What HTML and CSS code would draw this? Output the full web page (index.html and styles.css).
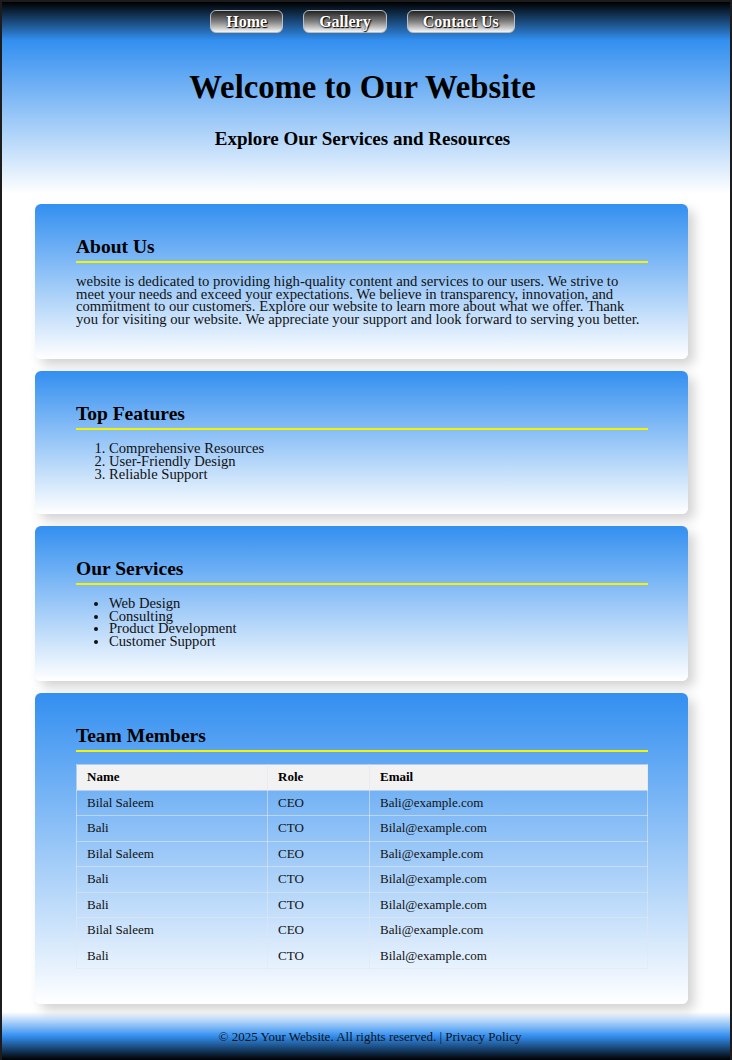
FILE: index.html
```html
<!DOCTYPE html>
<html lang="en">
<head>
<meta charset="utf-8">
<title>Welcome to Our Website</title>
<link rel="stylesheet" href="styles.css">
</head>
<body>
<div class="frame">
  <header class="site-header">
    <nav class="nav">
      <a class="nav-btn" href="#">Home</a>
      <a class="nav-btn" href="#">Gallery</a>
      <a class="nav-btn" href="#">Contact Us</a>
    </nav>
    <h1 class="title">Welcome to Our Website</h1>
    <h2 class="subtitle">Explore Our Services and Resources</h2>
  </header>

  <main class="main">
    <section class="card">
      <h2 class="card-title">About Us</h2>
      <p class="card-text">website is dedicated to providing high-quality content and services to our users. We strive to meet your needs and exceed your expectations. We believe in transparency, innovation, and commitment to our customers. Explore our website to learn more about what we offer. Thank you for visiting our website. We appreciate your support and look forward to serving you better.</p>
    </section>

    <section class="card">
      <h2 class="card-title">Top Features</h2>
      <ol class="card-list">
        <li>Comprehensive Resources</li>
        <li>User-Friendly Design</li>
        <li>Reliable Support</li>
      </ol>
    </section>

    <section class="card">
      <h2 class="card-title">Our Services</h2>
      <ul class="card-list">
        <li>Web Design</li>
        <li>Consulting</li>
        <li>Product Development</li>
        <li>Customer Support</li>
      </ul>
    </section>

    <section class="card">
      <h2 class="card-title">Team Members</h2>
      <table class="team">
        <thead>
          <tr><th class="col-name">Name</th><th class="col-role">Role</th><th>Email</th></tr>
        </thead>
        <tbody>
          <tr><td>Bilal Saleem</td><td>CEO</td><td>Bali@example.com</td></tr>
          <tr><td>Bali</td><td>CTO</td><td>Bilal@example.com</td></tr>
          <tr><td>Bilal Saleem</td><td>CEO</td><td>Bali@example.com</td></tr>
          <tr><td>Bali</td><td>CTO</td><td>Bilal@example.com</td></tr>
          <tr><td>Bali</td><td>CTO</td><td>Bilal@example.com</td></tr>
          <tr><td>Bilal Saleem</td><td>CEO</td><td>Bali@example.com</td></tr>
          <tr><td>Bali</td><td>CTO</td><td>Bilal@example.com</td></tr>
        </tbody>
      </table>
    </section>
  </main>

  <footer class="site-footer">
    <p class="footer-text">&copy; 2025 Your Website. All rights reserved. | <a class="footer-link" href="#">Privacy Policy</a></p>
  </footer>
</div>
</body>
</html>
```

FILE: styles.css
```css
* { box-sizing: border-box; }

html, body {
  margin: 0;
  padding: 0;
  background: #ffffff;
}

body {
  font-family: "Liberation Serif", "Times New Roman", serif;
  color: #111;
}

.frame {
  border: 2px solid #1c1c1c;
  min-height: 1060px;
  background: #fff;
}

/* Header */
.site-header {
  background: linear-gradient(to bottom, #000000 0%, #338ff0 20%, #ffffff 100%);
  padding: 8px 7px 44px 0;
  text-align: center;
}

.nav {
  display: flex;
  justify-content: center;
  gap: 20px;
}

.nav-btn {
  display: inline-block;
  font-weight: bold;
  font-size: 16px;
  line-height: 15px;
  padding: 3px 15px;
  color: #fff;
  text-decoration: none;
  border: 1px solid #bdbdbd;
  border-radius: 6px;
  background: linear-gradient(to bottom, #222 0%, #808080 50%, #f6f6f6 100%);
  text-shadow: 1px 1px 1px #000, 0 0 2px #222;
}

.title {
  margin: 36px 0 0;
  font-size: 32.7px;
  line-height: 36px;
  font-weight: bold;
  color: #000;
}

.subtitle {
  margin: 23px 0 0;
  font-size: 19px;
  line-height: 22px;
  font-weight: bold;
  color: #000;
}

/* Main */
.main {
  padding: 10px 42px 8px 33px;
  display: flex;
  flex-direction: column;
  gap: 12px;
}

.card {
  background: linear-gradient(to bottom, #338ff0 0%, #ffffff 100%);
  border-radius: 6px;
  padding: 32px 40px 33.5px 41px;
  box-shadow: 6px 6px 12px rgba(0, 0, 0, 0.18);
}

.card-title {
  margin: 0;
  font-size: 19.5px;
  line-height: 22px;
  font-weight: bold;
  color: #000;
  padding-bottom: 3px;
  border-bottom: 2px solid #f4f400;
}

.card-text {
  margin: 12px 0 0;
  max-width: 568px;
  font-size: 14.7px;
  line-height: 12.7px;
  color: #111;
}

.card-list {
  margin: 12px 0 0;
  padding-left: 33px;
  font-size: 14.6px;
  line-height: 12.7px;
  color: #111;
}

/* Table */
.team {
  margin: 12px 0 1.5px;
  width: 100%;
  border-collapse: collapse;
  font-size: 13px;
  line-height: 14.5px;
  color: #111;
}

.team th,
.team td {
  text-align: left;
  padding: 5px 10px;
  border: 1px solid rgba(225, 230, 240, 0.6);
}

.team th {
  background: #f2f2f2;
  font-weight: bold;
  color: #000;
}

.col-name { width: 191px; }
.col-role { width: 102px; }

/* Footer */
.site-footer {
  background: linear-gradient(to bottom, #ffffff 0%, #338ff0 50%, #000000 100%);
  padding: 17px 0 16px;
  text-align: center;
}

.footer-text {
  margin: 0;
  font-size: 13px;
  line-height: 15px;
  color: #111;
  padding-left: 8px;
}

.footer-link {
  color: #111;
  text-decoration: none;
}
```
